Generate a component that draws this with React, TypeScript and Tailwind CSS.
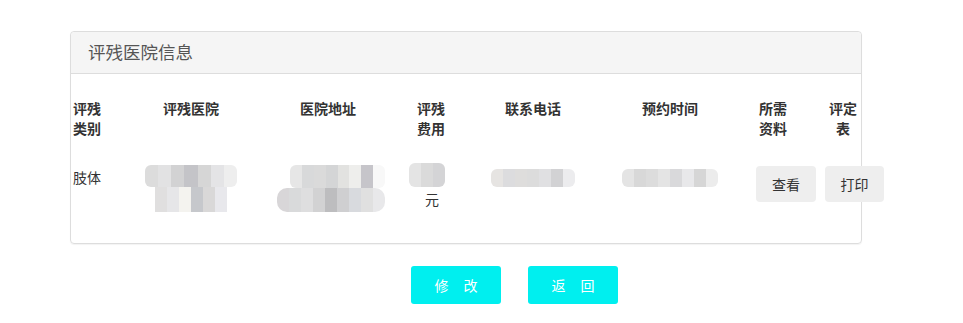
import React from "react";

// blurred placeholder cells (privacy mosaic)
const mosaic = {
  hospitalTop: ["bg-[#dcdcdc]", "bg-[#e2e2e3]", "bg-[#d2d2d3]", "bg-[#c4c4c8]", "bg-[#d6d6d6]", "bg-[#e4e4e6]", "bg-[#eeeeee]"],
  hospitalBottom: ["bg-[#e0dfdf]", "bg-[#e6e6e8]", "bg-[#f4f3ef]", "bg-[#c6c8cc]", "bg-[#d9d8d8]", "bg-[#e8e8ec]"],
  addrTop: ["bg-[#e6e6e6]", "bg-[#d8d9da]", "bg-[#dadada]", "bg-[#d4d5d6]", "bg-[#e2e2e0]", "bg-[#eeeeec]", "bg-[#c6c5ca]", "bg-[#f8f8f8]"],
  addrBottom: ["bg-[#d8d6d8]", "bg-[#d9dadb]", "bg-[#dededf]", "bg-[#d2d2d3]", "bg-[#bdbdbf]", "bg-[#cfcfd1]", "bg-[#d8dade]", "bg-[#e0e0e0]", "bg-[#e8e8ea]"],
  fee: ["bg-[#e4e4e4]", "bg-[#dadada]", "bg-[#d4d4d6]"],
  phone: ["bg-[#e6e4e2]", "bg-[#dcdcde]", "bg-[#dedddc]", "bg-[#dcdcdc]", "bg-[#e0e0e2]", "bg-[#d2d2d4]", "bg-[#ececee]"],
  time: ["bg-[#e4e4e4]", "bg-[#d8d8d8]", "bg-[#dcdcdc]", "bg-[#e4e4e4]", "bg-[#d9d9db]", "bg-[#e8e8ea]", "bg-[#d6d6d6]", "bg-[#ececec]"],
};

function Mosaic({ cells, className }: { cells: string[]; className: string }) {
  return (
    <div className={`flex overflow-hidden rounded-[6px] ${className}`}>
      {cells.map((c, i) => (
        <div key={i} className={`flex-1 h-full ${c}`} />
      ))}
    </div>
  );
}

const headers = ["评残类别", "评残医院", "医院地址", "评残费用", "联系电话", "预约时间", "所需资料", "评定表"];

export default function App() {
  return (
    <div
      className="w-[963px] h-[323px] bg-white text-[14px] text-[#333]"
      style={{ fontFamily: '"Noto Sans CJK SC", "Noto Sans", sans-serif' }}
    >
      <div className="pt-[31px]">
        {/* panel */}
        <div className="ml-[70px] w-[792px] border border-[#dddddd] rounded-[4px] shadow-[0_1px_1px_rgba(0,0,0,0.05)]">
          <div className="h-[42px] bg-[#f5f5f5] border-b border-[#dddddd] rounded-t-[4px] flex items-center pl-[17px]">
            <span className="text-[17.5px] text-[#555]">评残医院信息</span>
          </div>
          <div className="pt-[24px] pb-[31px]">
            <div className="grid grid-cols-[32px_176px_98px_108px_96px_178px_28px_112px] font-bold leading-5 items-start">
              <div className="pl-[2px]">{headers[0]}</div>
              <div className="text-center">{headers[1]}</div>
              <div className="text-center">{headers[2]}</div>
              <div className="flex justify-center">
                <span className="w-[28px]">{headers[3]}</span>
              </div>
              <div className="text-center">{headers[4]}</div>
              <div className="text-center">{headers[5]}</div>
              <div className="text-center">{headers[6]}</div>
              <div className="flex justify-center">
                <span className="w-[28px] text-center">{headers[7]}</span>
              </div>
            </div>

            <div className="mt-[25px] grid grid-cols-[32px_176px_98px_108px_96px_178px_28px_112px] leading-6 items-start">
              <div className="pl-[2px] mt-[2px]">肢体</div>
              <div className="flex justify-center mt-[2px]">
                <div className="flex flex-col items-center w-[92px]">
                  <Mosaic cells={mosaic.hospitalTop} className="w-[92px] h-[22px]" />
                  <Mosaic cells={mosaic.hospitalBottom} className="w-[72px] h-[25px] rounded-none" />
                </div>
              </div>
              <div className="flex mt-[2px] -ml-[2px]">
                <div className="flex flex-col items-end w-[108px] shrink-0">
                  <Mosaic cells={mosaic.addrTop} className="w-[95px] h-[23px]" />
                  <Mosaic cells={mosaic.addrBottom} className="w-[108px] h-[24px] rounded-[10px]" />
                </div>
              </div>
              <div className="flex pl-[32px]">
                <div className="flex flex-col items-start w-[36px]">
                  <Mosaic cells={mosaic.fee} className="w-[36px] h-[24px]" />
                  <span className="pl-[16px]">元</span>
                </div>
              </div>
              <div className="flex justify-center mt-[6px]">
                <Mosaic cells={mosaic.phone} className="w-[84px] h-[18px] rounded-[4px]" />
              </div>
              <div className="flex justify-center mt-[6px]">
                <Mosaic cells={mosaic.time} className="w-[96px] h-[18px] rounded-[4px]" />
              </div>
              <div className="col-span-2 flex gap-[9px] -ml-[3px] mt-[3px]">
                <button className="w-[60px] h-[36px] rounded-[4px] bg-[#eeeeee] text-[#333] leading-none">查看</button>
                <button className="w-[59px] h-[36px] rounded-[4px] bg-[#eeeeee] text-[#333] leading-none">打印</button>
              </div>
            </div>
          </div>
        </div>

        {/* actions */}
        <div className="mt-[22px] ml-[411px] flex gap-[27px]">
          <button className="w-[90px] h-[38px] rounded-[3px] bg-[#00efef] text-white flex items-center justify-center gap-[15px]">
            <span>修</span>
            <span>改</span>
          </button>
          <button className="w-[90px] h-[38px] rounded-[3px] bg-[#00efef] text-white flex items-center justify-center gap-[15px]">
            <span>返</span>
            <span>回</span>
          </button>
        </div>
      </div>
    </div>
  );
}
